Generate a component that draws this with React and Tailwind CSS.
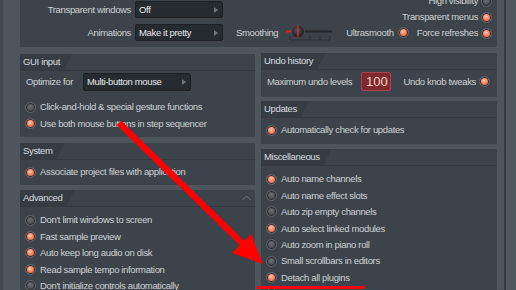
import React from "react";

const Radio = ({ on }) => (
    <span
        className={`inline-block shrink-0 w-[11px] h-[11px] rounded-full border border-[#5f656b] shadow-[inset_0_0_0_1px_#2a2e32] ${
            on
                ? "bg-[radial-gradient(circle_at_45%_40%,#ffc7ad_0%,#f67c5a_45%,#d6452b_100%)]"
                : "bg-[radial-gradient(circle_at_45%_40%,#6b7076_0%,#4a4f55_55%,#373b40_100%)]"
        }`}
    />
);

const Check = ({ on, children }) => (
    <div className="flex items-center gap-[4px] h-[16.4px] whitespace-nowrap">
        <Radio on={on} />
        <span>{children}</span>
    </div>
);

const Dropdown = ({ children, className = "" }) => (
    <div
        className={`flex items-center justify-between bg-[#262b30] border border-[#1d2125] rounded-[2px] pl-[3px] pr-[4px] text-[#e6e9ec] ${className}`}
    >
        <span>{children}</span>
        <svg width="4" height="6" viewBox="0 0 4 6">
            <path d="M0 0 L4 3 L0 6 Z" fill="#6f757c" />
        </svg>
    </div>
);

const Header = ({ title, chevron }) => (
    <div className="flex items-stretch justify-between h-[17px] border-b border-[#343a40]">
        <div className="flex items-center pl-[3px] pr-[12px] bg-[#353c43] text-[#d8dce0] [clip-path:polygon(0_0,100%_0,calc(100%-8px)_100%,0_100%)]">
            {title}
        </div>
        {chevron && (
            <svg className="mr-[4px] self-center" width="9" height="6" viewBox="0 0 9 6">
                <path d="M0.5 5 L4.5 1 L8.5 5" fill="none" stroke="#6d737a" strokeWidth="1" />
            </svg>
        )}
    </div>
);

const Panel = ({ className = "", children }) => (
    <div className={`bg-[#3c434a] rounded-[1px] overflow-hidden ${className}`}>{children}</div>
);

const Slider = () => (
    <svg width="50" height="17" viewBox="0 0 50 17" className="ml-[6px] shrink-0">
        <defs>
            <radialGradient id="knob" cx="45%" cy="40%" r="60%">
                <stop offset="0%" stopColor="#50565c" />
                <stop offset="70%" stopColor="#262a2e" />
                <stop offset="100%" stopColor="#1b1e21" />
            </radialGradient>
        </defs>
        <line x1="6" y1="16" x2="46" y2="16" stroke="#2b3035" strokeWidth="1" />
        {[6, 16, 26, 36, 46].map((x) => (
            <line key={x} x1={x} y1="12" x2={x} y2="16" stroke="#2b3035" strokeWidth="1" />
        ))}
        <line x1="14" y1="7.5" x2="48" y2="7.5" stroke="#23272b" strokeWidth="2" />
        <line x1="2" y1="7.5" x2="9" y2="7.5" stroke="#d42020" strokeWidth="2" />
        <circle cx="14" cy="7.5" r="6.5" fill="url(#knob)" stroke="#55595e" strokeWidth="0.6" />
        <line x1="14" y1="1.5" x2="14" y2="13.5" stroke="#e32222" strokeWidth="1.4" />
    </svg>
);

export default function App() {
    return (
        <div className="relative w-[516px] h-[290px] overflow-hidden flex bg-[#4d555d] font-['Liberation_Sans_Narrow','Liberation_Sans',sans-serif] text-[9.5px] tracking-[-0.35px] leading-none text-[#cdd2d7]">
            <div className="w-[3px] shrink-0 bg-[#41484f]" />
            <div className="w-[17px] shrink-0" />

            <div className="w-[477px] shrink-0 flex flex-col gap-[6px]">
                {/* display settings (scrolled) */}
                <Panel className="h-[67px] -mt-[20px] shrink-0 flex items-end pb-[6px] pr-[7px] whitespace-nowrap">
                    <div className="flex flex-col gap-[6px] shrink-0">
                        <div className="flex items-center">
                            <span className="w-[111px] text-right">Transparent windows</span>
                            <Dropdown className="ml-[4px] w-[88px] h-[17px]">Off</Dropdown>
                        </div>
                        <div className="flex items-center">
                            <span className="w-[111px] text-right">Animations</span>
                            <Dropdown className="ml-[4px] w-[88px] h-[17px]">Make it pretty</Dropdown>
                        </div>
                    </div>
                    <div className="flex items-center h-[17px] w-[166px] ml-[13px] shrink-0">
                        <span>Smoothing</span>
                        <Slider />
                        <span className="ml-[12px]">Ultrasmooth</span>
                        <span className="ml-[4px] flex">
                            <Radio on />
                        </span>
                    </div>
                    <div className="ml-auto flex flex-col items-end shrink-0">
                        {[
                            ["High visibility", false],
                            ["Transparent menus", true],
                            ["Force refreshes", true],
                        ].map(([t, on]) => (
                            <div key={t} className="flex items-center gap-[3px] h-[16px]">
                                <span>{t}</span>
                                <Radio on={on} />
                            </div>
                        ))}
                    </div>
                </Panel>

                <div className="flex gap-[6px] flex-1 min-h-0">
                    {/* left column */}
                    <div className="w-[235px] flex flex-col pt-[1px]">
                        <Panel className="h-[83px] shrink-0">
                            <Header title="GUI input" />
                            <div className="flex items-center mt-[2px] pl-[6px]">
                                <span className="w-[57px]">Optimize for</span>
                                <Dropdown className="w-[108px] h-[18px]">Multi-button mouse</Dropdown>
                            </div>
                            <div className="mt-[8px] pl-[5px]">
                                <Check>Click-and-hold &amp; special gesture functions</Check>
                                <Check on>Use both mouse buttons in step sequencer</Check>
                            </div>
                        </Panel>

                        <Panel className="h-[42px] shrink-0 mt-[6px]">
                            <Header title="System" />
                            <div className="pt-[4px] pl-[5px]">
                                <Check on>Associate project files with application</Check>
                            </div>
                        </Panel>

                        <Panel className="flex-1 mt-[5px]">
                            <Header title="Advanced" chevron />
                            <div className="pt-[5px] pl-[5px]">
                                <Check>Don't limit windows to screen</Check>
                                <Check on>Fast sample preview</Check>
                                <Check on>Auto keep long audio on disk</Check>
                                <Check on>Read sample tempo information</Check>
                                <Check>Don't initialize controls automatically</Check>
                            </div>
                        </Panel>
                    </div>

                    {/* right column */}
                    <div className="w-[236px] flex flex-col">
                        <Panel className="h-[44px] shrink-0">
                            <Header title="Undo history" />
                            <div className="flex items-center h-[21px] mt-[1px] pl-[6px] pr-[7px] whitespace-nowrap">
                                <span className="w-[94px]">Maximum undo levels</span>
                                <div className="relative w-[30px] h-[19px] bg-[#7f282e] border border-[#a4444b] rounded-[2px] flex items-center pl-[4px] text-[13px] tracking-normal text-[#f6d3c4]">
                                    100
                                    <svg className="absolute right-[2px] top-[5px]" width="3" height="8" viewBox="0 0 3 8">
                                        <path d="M0 3 L1.5 0.5 L3 3 M0 5 L1.5 7.5 L3 5" fill="none" stroke="#c36a6f" strokeWidth="0.8" />
                                    </svg>
                                </div>
                                <div className="ml-auto flex items-center gap-[3px]">
                                    <span>Undo knob tweaks</span>
                                    <Radio on />
                                </div>
                            </div>
                        </Panel>

                        <Panel className="h-[43px] shrink-0 mt-[4px]">
                            <Header title="Updates" />
                            <div className="pt-[4px] pl-[5px]">
                                <Check on>Automatically check for updates</Check>
                            </div>
                        </Panel>

                        <Panel className="flex-1 mt-[5px]">
                            <Header title="Miscellaneous" />
                            <div className="pt-[5px] pl-[5px]">
                                <Check on>Auto name channels</Check>
                                <Check>Auto name effect slots</Check>
                                <Check>Auto zip empty channels</Check>
                                <Check on>Auto select linked modules</Check>
                                <Check>Auto zoom in piano roll</Check>
                                <Check>Small scrollbars in editors</Check>
                                <Check on>Detach all plugins</Check>
                                <Check>Remember plugin window positions</Check>
                            </div>
                        </Panel>
                    </div>
                </div>
            </div>

            <div className="w-[7px] shrink-0" />
            <div className="w-[2px] shrink-0 bg-[#353b41]" />
            <div className="flex-1 bg-[#4f575f]" />

            {/* red annotation */}
            <svg className="absolute inset-0 pointer-events-none" width="516" height="290" viewBox="0 0 516 290">
                <line x1="119" y1="123" x2="245" y2="246" stroke="#ff0000" strokeWidth="6.5" />
                <polygon points="263,264 232,253 251,234" fill="#ff0000" />
                <line x1="257" y1="287.5" x2="365" y2="287.5" stroke="#ff0000" strokeWidth="3" />
            </svg>
        </div>
    );
}
